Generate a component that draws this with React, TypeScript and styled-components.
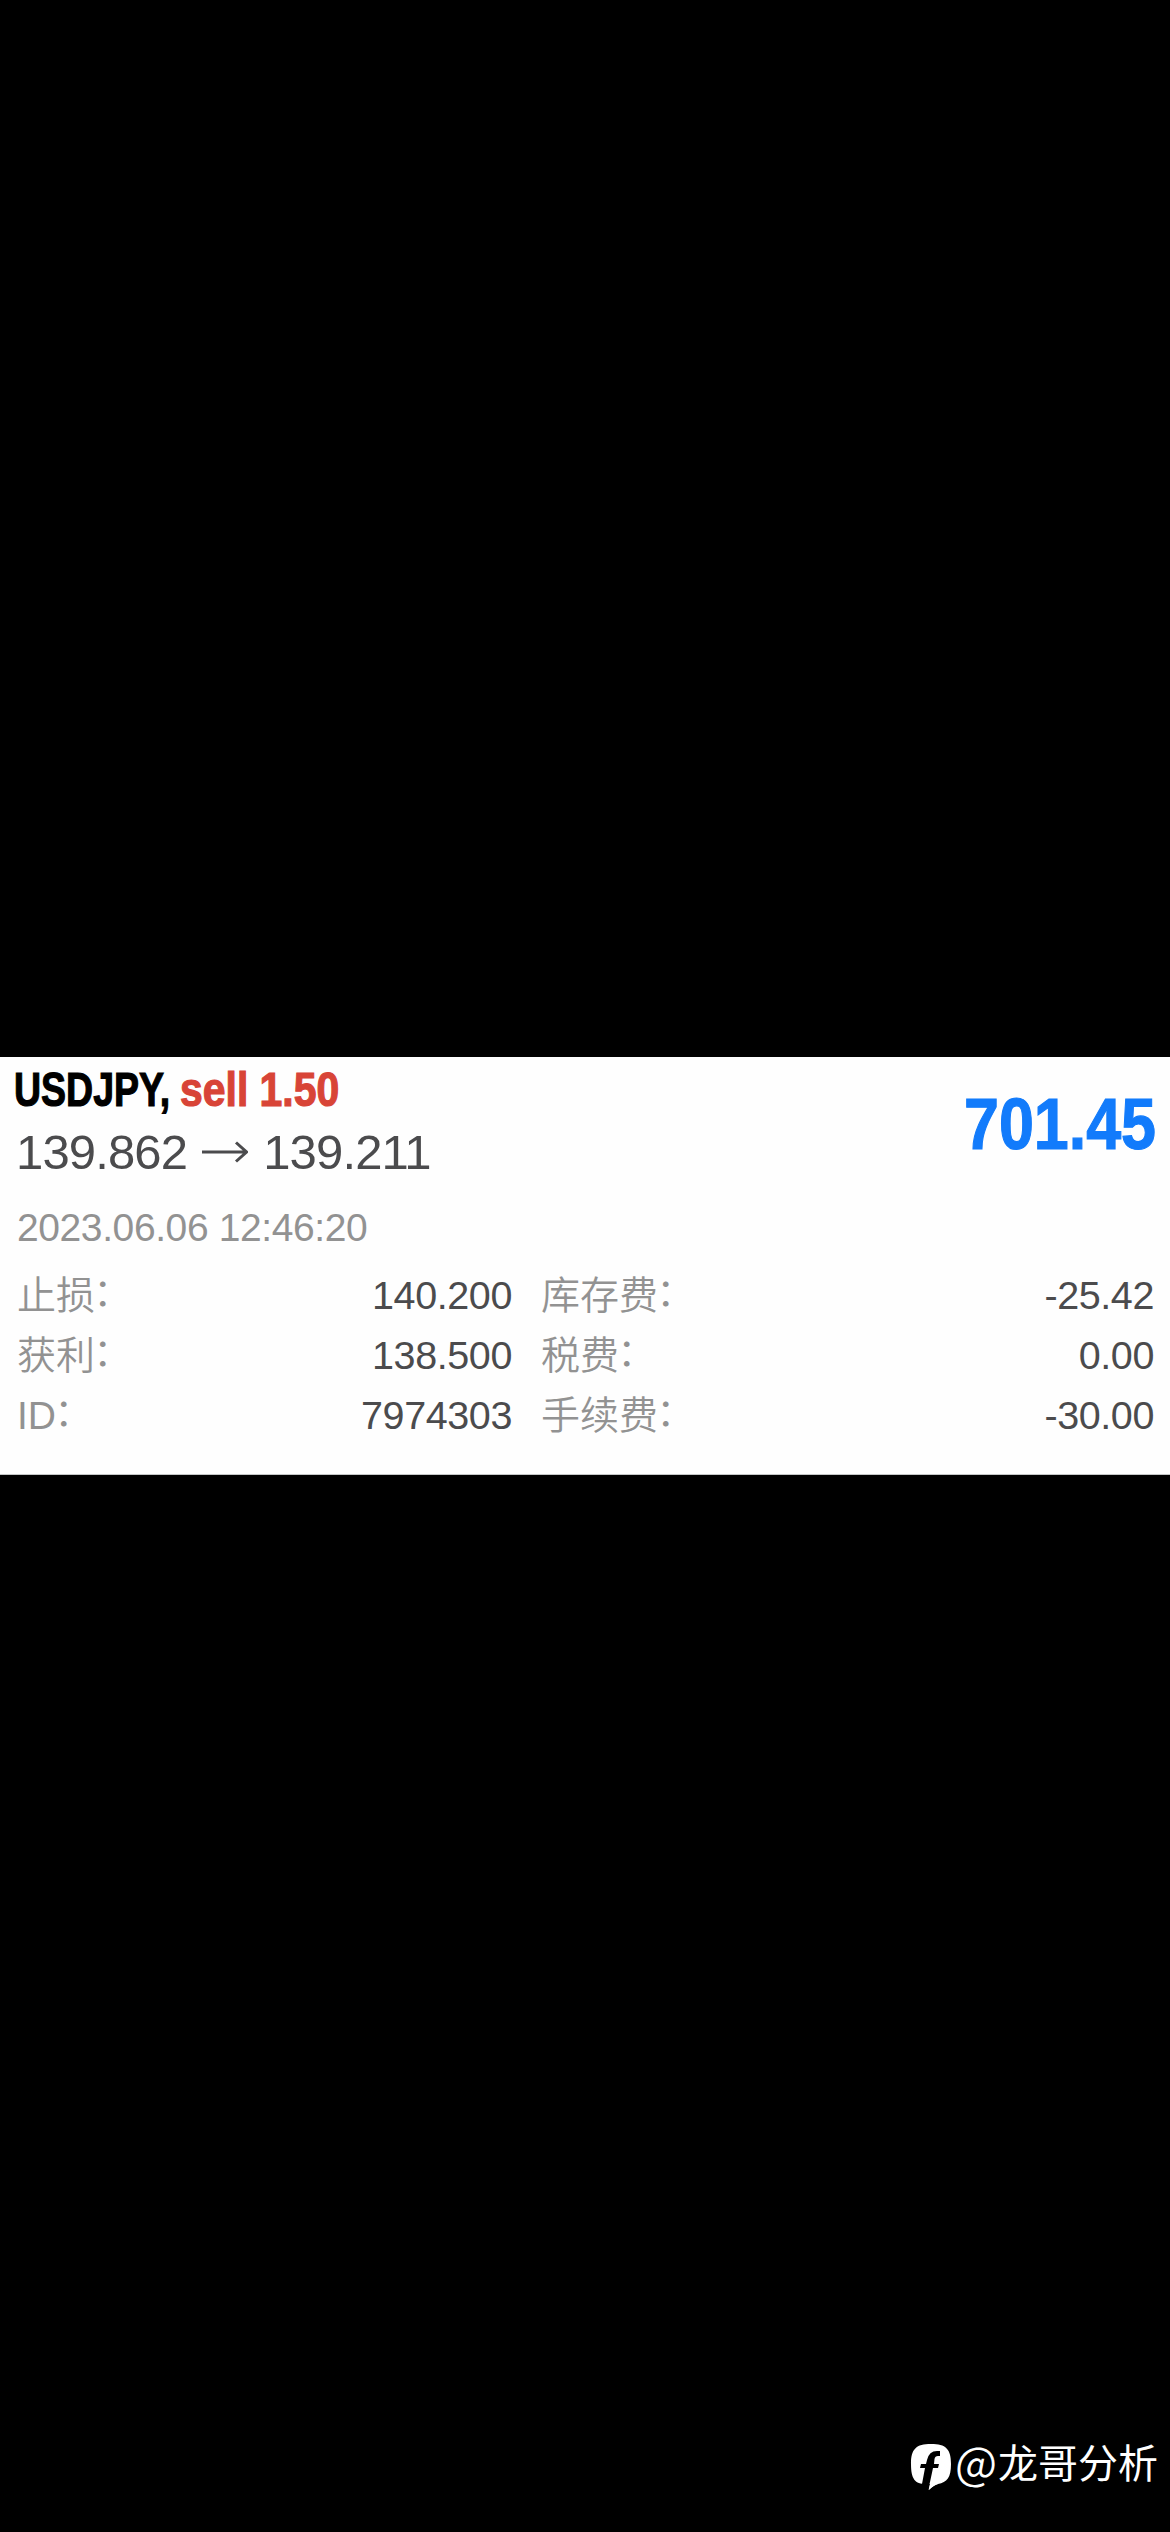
import React from "react";
import styled, { createGlobalStyle } from "styled-components";

const GlobalStyle = createGlobalStyle`
  body {
    margin: 0;
    background: #000;
  }
`;

const sans = `"Liberation Sans", "Noto Sans CJK SC", sans-serif`;
const cjk = `"Noto Sans CJK SC", sans-serif`;

const Screen = styled.main`
  box-sizing: border-box;
  width: 1170px;
  height: 2532px;
  padding-top: 1057px;
  display: flex;
  flex-direction: column;
  justify-content: space-between;
  background: #000;
  font-family: ${sans};
  overflow: hidden;
`;

const Card = styled.section`
  box-sizing: border-box;
  height: 418px;
  padding: 5px 16px 0;
  display: flex;
  flex-direction: column;
  background: #fefefe;
  border-bottom: 1px solid #c4c6c6;
`;

const Header = styled.header`
  display: flex;
  justify-content: space-between;
  height: 130px;
`;

const Summary = styled.div`
  display: flex;
  flex-direction: column;
`;

const Title = styled.div`
  display: flex;
  height: 57px;
  margin-left: -2px;
`;

const Condensed = styled.span<{
  $width: number;
  $scale: number;
  $color: string;
  $size: number;
  $line: number;
}>`
  display: block;
  width: ${(p) => p.$width}px;
  color: ${(p) => p.$color};
  font-size: ${(p) => p.$size}px;
  font-weight: 700;
  line-height: ${(p) => p.$line}px;
  white-space: nowrap;
  -webkit-text-stroke: 1.2px ${(p) => p.$color};
  transform: scaleX(${(p) => p.$scale});
  transform-origin: left center;
`;

const Prices = styled.div`
  display: flex;
  align-items: center;
  height: 66px;
  color: #4b4b4d;
  font-size: 49px;
  line-height: 66px;
  letter-spacing: -0.85px;
`;

const Arrow = styled.svg`
  width: 46px;
  height: 22px;
  margin: 0 15px 0 15px;
`;

const Profit = styled.div`
  padding-top: 22px;
`;

const Time = styled.time`
  height: 73px;
  padding-left: 1px;
  color: #929292;
  font-size: 39px;
  line-height: 72px;
  letter-spacing: -0.4px;
`;

const Details = styled.dl`
  display: grid;
  grid-template-columns: 495px 613px;
  column-gap: 29px;
  grid-auto-rows: 60px;
  margin: 0;
`;

const Detail = styled.div`
  display: flex;
  justify-content: space-between;
  line-height: 60px;
`;

const Label = styled.dt`
  padding: 1px 0 0 1px;
  color: #929292;
  font-family: ${sans};
  font-size: 39px;
  font-weight: 350;
`;

const Colon = styled.span`
  display: inline-block;
  transform: translate(-2px, -3px);
`;

const Value = styled.dd`
  margin: 0 -1px 0 0;
  color: #4b4b4d;
  font-size: 39.5px;
  letter-spacing: -0.4px;
`;

const Watermark = styled.footer`
  display: flex;
  align-items: center;
  justify-content: flex-end;
  height: 60px;
  padding: 0 12px 41px 0;
  color: #fff;
  font-family: ${cjk};
  font-size: 40px;
  font-weight: 400;
  line-height: 60px;
`;

const At = styled.span`
  margin: 0 1px 0 3px;
  font-size: 45px;
  font-weight: 350;
`;

const Badge = styled.svg`
  width: 42px;
  height: 46px;
  margin-top: 11px;
`;

const details = [
  ["止损", "140.200"],
  ["库存费", "-25.42"],
  ["获利", "138.500"],
  ["税费", "0.00"],
  ["ID", "7974303"],
  ["手续费", "-30.00"],
];

export default function App() {
  return (
    <Screen>
      <GlobalStyle />
      <Card>
        <Header>
          <Summary>
            <Title>
              <Condensed $width={166} $scale={0.765} $color="#000" $size={49} $line={55}>
                USDJPY,
              </Condensed>
              <Condensed $width={162} $scale={0.835} $color="#d84437" $size={49} $line={55}>
                sell 1.50
              </Condensed>
            </Title>
            <Prices>
              <span>139.862</span>
              <Arrow viewBox="0 0 46 22" fill="none" stroke="#4b4b4d" strokeWidth="3">
                <path d="M0 11H44M34 1.5L44.500 11L34 20.500" />
              </Arrow>
              <span>139.211</span>
            </Prices>
          </Summary>
          <Profit>
            <Condensed $width={190} $scale={0.86} $color="#127bfb" $size={73} $line={80}>
              701.45
            </Condensed>
          </Profit>
        </Header>
        <Time>2023.06.06 12:46:20</Time>
        <Details>
          {details.map(([label, value]) => (
            <Detail key={label}>
              <Label>
                {label}
                <Colon>：</Colon>
              </Label>
              <Value>{value}</Value>
            </Detail>
          ))}
        </Details>
      </Card>
      <Watermark>
        <Badge viewBox="0 0 42 46">
          <path
            fill="#fff"
            d="M21 0C36 0 41 5 41 20C41 34 37 38 28 40Q24 41 19 46L20 40H16C5 40 1 35 1 20C1 5 6 0 21 0Z"
          />
          <path
            fill="#000"
            d="M30 7V12H28Q25 12 24.500 15L24 20H29L28 24H23L20 38L18 46L12 40L15 24H10L11 20H16L17 16Q19 7 27 7Z"
          />
          <path fill="#fff" d="M20 40H28Q24 41 18.500 46Z" />
        </Badge>
        <At>@</At>
        <span>龙哥分析</span>
      </Watermark>
    </Screen>
  );
}
